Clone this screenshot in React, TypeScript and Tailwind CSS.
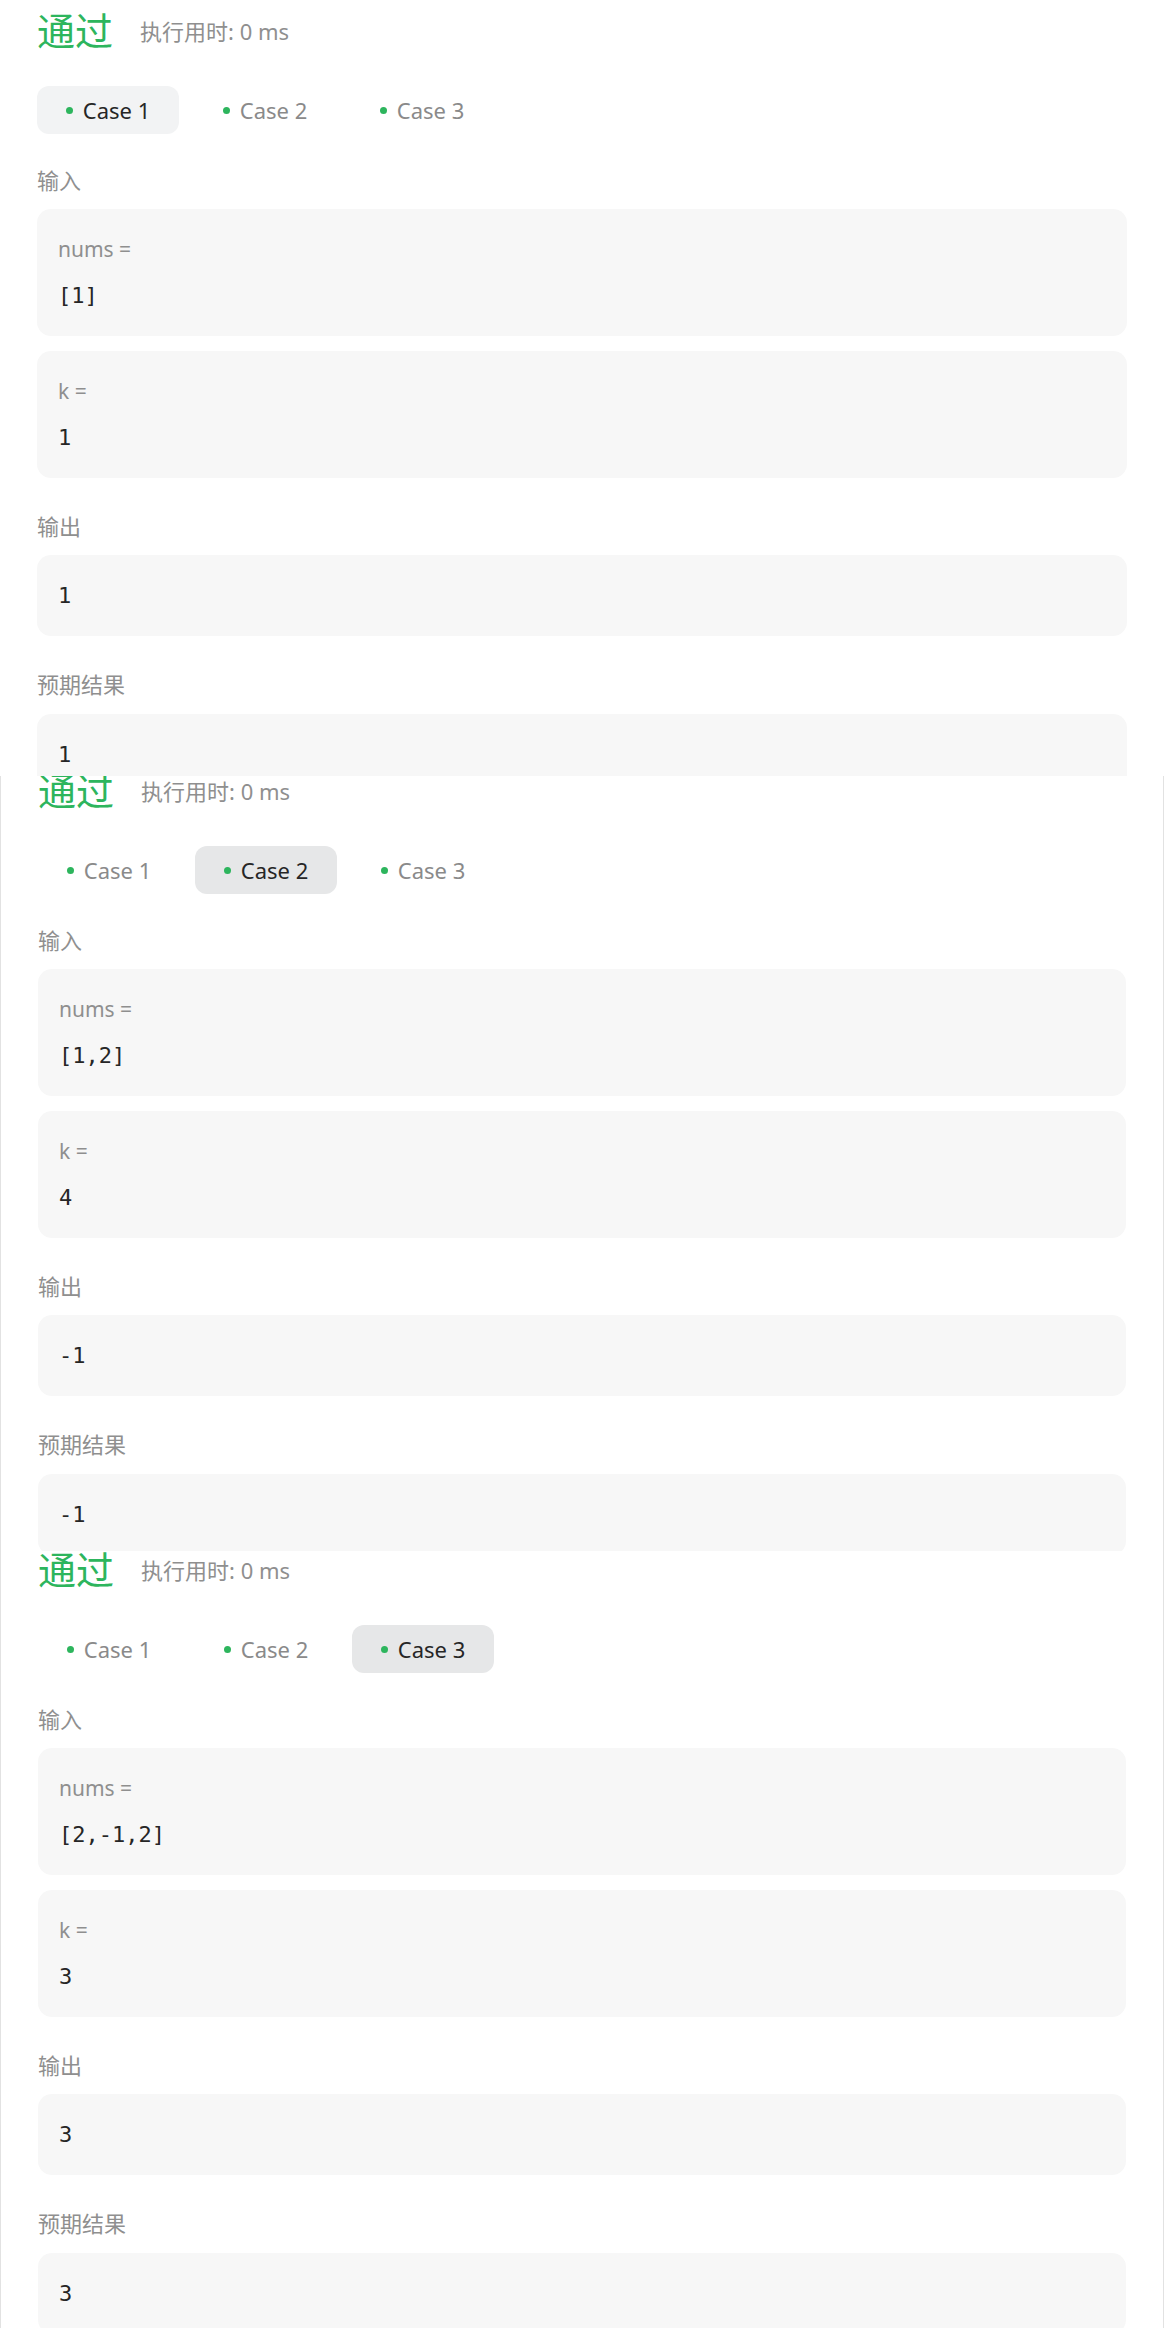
import React from 'react';

interface CaseData {
    nums: string;
    k: string;
    output: string;
    expected: string;
}

const cases: CaseData[] = [
    { nums: '[1]', k: '1', output: '1', expected: '1' },
    { nums: '[1,2]', k: '4', output: '-1', expected: '-1' },
    { nums: '[2,-1,2]', k: '3', output: '3', expected: '3' },
];

const sans = { fontFamily: '"Noto Sans", "Noto Sans CJK SC", sans-serif' };
const mono = { fontFamily: '"DejaVu Sans Mono", "Noto Sans CJK SC", monospace' };

function Label({ children, first }: { children: React.ReactNode; first?: boolean }) {
    return (
        <div
            className={`${first ? 'mt-[31px]' : 'mt-[33px]'} h-[30px] flex items-center text-[22px] text-[#8f8f8f]`}
            style={sans}
        >
            {children}
        </div>
    );
}

function ValueBox({ name, value }: { name?: string; value: string }) {
    return (
        <div className="rounded-[14px] bg-[#f7f7f7] px-[21px] pt-[25px] pb-[26px]">
            {name && (
                <div className="h-[30px] mt-[1px] mb-[15px] flex items-center text-[21px] text-[#8f8f8f]" style={sans}>
                    {name} =
                </div>
            )}
            <div className="h-[30px] flex items-center text-[22px] text-[#262626]" style={mono}>
                {value}
            </div>
        </div>
    );
}

function ResultPanel({ active, activeBg }: { active: number; activeBg: string }) {
    const data = cases[active];
    return (
        <div className="px-[37px]">
            {/* header */}
            <div className="h-[60px] flex items-center gap-[27px]">
                <span className="text-[38px] leading-none text-[#2db55d]" style={sans}>通过</span>
                <span className="text-[22px] text-[#8f8f8f] pt-[2px]" style={sans}>执行用时: 0 ms</span>
            </div>

            {/* case tabs */}
            <div className="mt-[26px] flex gap-[15px]">
                {cases.map((_, i) => (
                    <div
                        key={i}
                        className={`w-[142px] h-[48px] rounded-[12px] flex items-center justify-center gap-[10px] ${i === active ? activeBg : ''}`}
                    >
                        <span className="w-[7px] h-[7px] rounded-full bg-[#2db55d]" />
                        <span
                            className={`text-[22px] ${i === active ? 'text-[#262626]' : 'text-[#8a8a8a]'}`}
                            style={sans}
                        >
                            Case {i + 1}
                        </span>
                    </div>
                ))}
            </div>

            <Label first>输入</Label>
            <div className="mt-[14px] flex flex-col gap-[15px]">
                <ValueBox name="nums" value={data.nums} />
                <ValueBox name="k" value={data.k} />
            </div>

            <Label>输出</Label>
            <div className="mt-[14px]">
                <ValueBox value={data.output} />
            </div>

            <Label>预期结果</Label>
            <div className="mt-[15px]">
                <ValueBox value={data.expected} />
            </div>
        </div>
    );
}

export default function App() {
    return (
        <div className="w-[1164px] bg-white">
            <div className="h-[776px] overflow-hidden">
                <ResultPanel active={0} activeBg="bg-[#f2f3f4]" />
            </div>
            <div className="h-[775px] overflow-hidden border-x border-[#e2e2e2]">
                <div className="-mt-[16px]">
                    <ResultPanel active={1} activeBg="bg-[#e6e7e8]" />
                </div>
            </div>
            <div className="h-[777px] overflow-hidden border-x border-[#e2e2e2]">
                <div className="-mt-[12px]">
                    <ResultPanel active={2} activeBg="bg-[#e6e7e8]" />
                </div>
            </div>
        </div>
    );
}
